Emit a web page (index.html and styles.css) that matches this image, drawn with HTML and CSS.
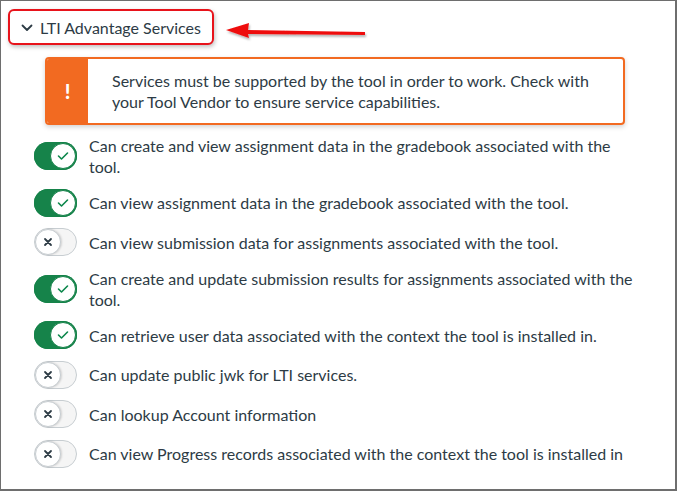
FILE: index.html
```html
<!DOCTYPE html>
<html>
<head>
<meta charset="utf-8">
<link rel="stylesheet" href="styles.css">
</head>
<body>
<div class="frame">
  <div class="header">
    <button class="toggle-group">
      <svg class="chev" width="12" height="8" viewBox="0 0 12 8"><path d="M1.5 1.5 L6 6 L10.5 1.5" fill="none" stroke="#2d3b45" stroke-width="1.8" stroke-linecap="round" stroke-linejoin="round"/></svg>
      <span>LTI Advantage Services</span>
    </button>
    <svg class="arrow" width="150" height="20" viewBox="0 0 150 20">
      <defs><filter id="sh" x="-10%" y="-50%" width="130%" height="220%"><feDropShadow dx="1" dy="2" stdDeviation="1.2" flood-color="#000" flood-opacity="0.3"/></filter></defs>
      <g filter="url(#sh)">
        <polygon points="2,8 25,1 24,8 141,10 141,13 24,12 25,16" fill="#ee1111"/>
      </g>
    </svg>
  </div>

  <div class="alert">
    <div class="alert-icon">!</div>
    <div class="alert-text">Services must be supported by the tool in order to work. Check with your Tool Vendor to ensure service capabilities.</div>
  </div>

  <ul class="list">
    <li class="row"><span class="sw on"><span class="knob"><svg width="12" height="10" viewBox="0 0 12 10"><path d="M1.5 5 L4.5 8 L10.5 2" fill="none" stroke="#0b874b" stroke-width="1.6" stroke-linecap="round" stroke-linejoin="round"/></svg></span></span><span class="label">Can create and view assignment data in the gradebook associated with the tool.</span></li>
    <li class="row"><span class="sw on"><span class="knob"><svg width="12" height="10" viewBox="0 0 12 10"><path d="M1.5 5 L4.5 8 L10.5 2" fill="none" stroke="#0b874b" stroke-width="1.6" stroke-linecap="round" stroke-linejoin="round"/></svg></span></span><span class="label">Can view assignment data in the gradebook associated with the tool.</span></li>
    <li class="row"><span class="sw off"><span class="knob"><svg width="10" height="10" viewBox="0 0 10 10"><path d="M2 2 L8 8 M8 2 L2 8" fill="none" stroke="#2d3b45" stroke-width="1.8" stroke-linecap="round"/></svg></span></span><span class="label">Can view submission data for assignments associated with the tool.</span></li>
    <li class="row"><span class="sw on"><span class="knob"><svg width="12" height="10" viewBox="0 0 12 10"><path d="M1.5 5 L4.5 8 L10.5 2" fill="none" stroke="#0b874b" stroke-width="1.6" stroke-linecap="round" stroke-linejoin="round"/></svg></span></span><span class="label">Can create and update submission results for assignments associated with the tool.</span></li>
    <li class="row"><span class="sw on"><span class="knob"><svg width="12" height="10" viewBox="0 0 12 10"><path d="M1.5 5 L4.5 8 L10.5 2" fill="none" stroke="#0b874b" stroke-width="1.6" stroke-linecap="round" stroke-linejoin="round"/></svg></span></span><span class="label">Can retrieve user data associated with the context the tool is installed in.</span></li>
    <li class="row"><span class="sw off"><span class="knob"><svg width="10" height="10" viewBox="0 0 10 10"><path d="M2 2 L8 8 M8 2 L2 8" fill="none" stroke="#2d3b45" stroke-width="1.8" stroke-linecap="round"/></svg></span></span><span class="label">Can update public jwk for LTI services.</span></li>
    <li class="row"><span class="sw off"><span class="knob"><svg width="10" height="10" viewBox="0 0 10 10"><path d="M2 2 L8 8 M8 2 L2 8" fill="none" stroke="#2d3b45" stroke-width="1.8" stroke-linecap="round"/></svg></span></span><span class="label">Can lookup Account information</span></li>
    <li class="row"><span class="sw off"><span class="knob"><svg width="10" height="10" viewBox="0 0 10 10"><path d="M2 2 L8 8 M8 2 L2 8" fill="none" stroke="#2d3b45" stroke-width="1.8" stroke-linecap="round"/></svg></span></span><span class="label">Can view Progress records associated with the context the tool is installed in</span></li>
  </ul>
</div>
</body>
</html>
```

FILE: styles.css
```css
* { box-sizing: border-box; }
html, body { margin: 0; padding: 0; background: #fff; }
body { font-family: Lato, "Noto Sans", sans-serif; color: #2d3b45; }

.frame {
  width: 677px;
  height: 491px;
  border: 1px solid #6e6e6e;
  border-right-width: 2px;
  border-bottom-width: 2px;
  padding: 8px 0 0 7px;
  overflow: hidden;
}

.header {
  display: flex;
  align-items: center;
  position: relative;
}

.toggle-group {
  display: inline-flex;
  align-items: center;
  gap: 7px;
  width: 206px;
  height: 36px;
  padding: 0 0 0 11px;
  border: 2px solid #e8131b;
  border-radius: 6px;
  background: #fff;
  box-shadow: 1px 2px 4px rgba(0,0,0,0.25);
  font-family: Lato, sans-serif;
  font-size: 16px;
  color: #2d3b45;
  cursor: pointer;
}

.chev { flex: none; margin-top: 1px; }

.arrow {
  position: absolute;
  left: 216px;
  top: 13px;
}

.alert {
  display: flex;
  margin: 12px 0 0 37px;
  width: 580px;
  height: 68px;
  border: 2px solid #f26a21;
  border-radius: 4px;
  box-shadow: 0 2px 5px rgba(0,0,0,0.18);
  overflow: hidden;
}

.alert-icon {
  flex: none;
  width: 41px;
  background: #f26a21;
  color: #fff;
  font-weight: 900;
  font-size: 20px;
  display: flex;
  align-items: center;
  justify-content: center;
}

.alert-text {
  padding: 0 20px 0 24px;
  font-size: 16px;
  line-height: 21px;
  display: flex;
  align-items: center;
}

.list {
  list-style: none;
  margin: 10px 0 0 0;
  padding: 0 0 0 26px;
}

.row {
  display: flex;
  align-items: center;
  gap: 12px;
  margin-bottom: 11.5px;
}

.label {
  font-size: 16px;
  line-height: 21px;
  max-width: 548px;
}

.sw {
  flex: none;
  width: 43px;
  height: 28px;
  border-radius: 14px;
  display: flex;
  align-items: center;
  padding: 0 1px;
}

.sw.on {
  background: #16834a;
  justify-content: flex-end;
  box-shadow: inset 0 0 0 1px #16834a;
}

.sw.off {
  background: #f5f5f5;
  border: 1px solid #c7cdd1;
  justify-content: flex-start;
  padding: 0;
}

.knob {
  width: 26px;
  height: 26px;
  border-radius: 50%;
  background: #fff;
  display: flex;
  align-items: center;
  justify-content: center;
}

.sw.on .knob { border: 1px solid #16834a; }
.sw.off .knob {
  border: 1px solid #c7cdd1;
  box-shadow: 1px 0 2px rgba(0,0,0,0.15);
}
```
